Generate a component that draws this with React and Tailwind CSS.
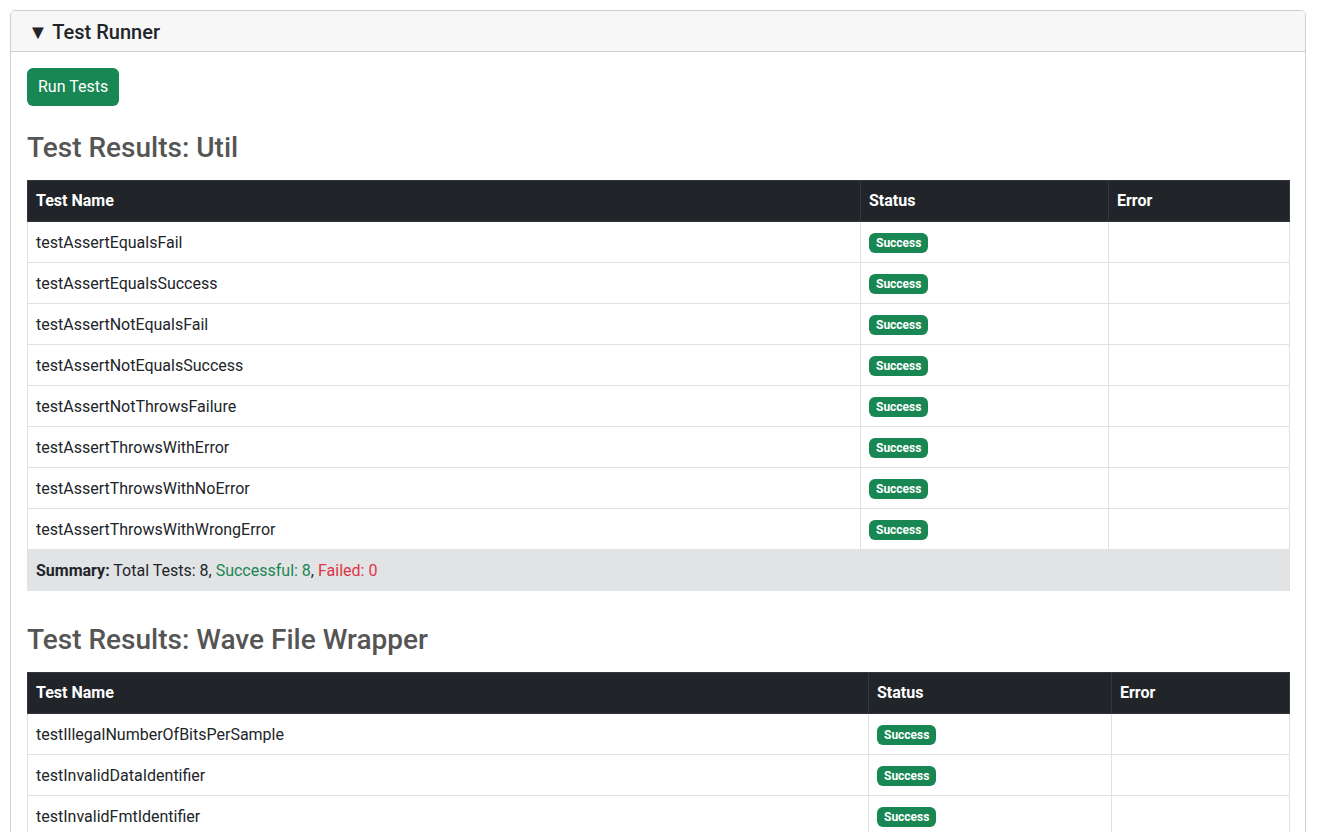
import { useState } from "react";

const utilTests = [
  "testAssertEqualsFail",
  "testAssertEqualsSuccess",
  "testAssertNotEqualsFail",
  "testAssertNotEqualsSuccess",
  "testAssertNotThrowsFailure",
  "testAssertThrowsWithError",
  "testAssertThrowsWithNoError",
  "testAssertThrowsWithWrongError",
];

const waveTests = [
  "testIllegalNumberOfBitsPerSample",
  "testInvalidDataIdentifier",
  "testInvalidFmtIdentifier",
  "testInvalidRiffIdentifier",
  "testInvalidWaveIdentifier",
];

function ResultsTable({ title, tests, cols }) {
  return (
    <section>
      <h3 className="text-[28px] leading-[34px] font-medium text-[#555555] mb-[15px]">
        Test Results: {title}
      </h3>
      <table className="table-fixed w-full border-collapse text-[16px] leading-6 text-[#212529]">
        <colgroup>
          <col style={{ width: cols[0] }} />
          <col style={{ width: cols[1] }} />
          <col style={{ width: cols[2] }} />
        </colgroup>
        <thead>
          <tr className="bg-[#212529] text-white text-left">
            <th className="font-bold px-2 py-2 border border-[#32383e] h-[41px]">Test Name</th>
            <th className="font-bold px-2 py-2 border border-[#32383e]">Status</th>
            <th className="font-bold px-2 py-2 border border-[#32383e]">Error</th>
          </tr>
        </thead>
        <tbody>
          {tests.map((t) => (
            <tr key={t}>
              <td className="px-2 pt-[9px] pb-[7px] border border-[#dee2e6] h-[41px]">{t}</td>
              <td className="px-2 py-2 border border-[#dee2e6]">
                <span className="inline-block bg-[#198754] text-white text-[12px] leading-[12px] font-bold px-[7px] py-[4px] rounded-[6px] align-middle">
                  Success
                </span>
              </td>
              <td className="px-2 py-2 border border-[#dee2e6]"></td>
            </tr>
          ))}
          <tr className="bg-[#e2e3e5]">
            <td colSpan={3} className="px-2 pt-[9px] pb-[7px] border border-[#dee2e6] h-[41px]">
              <strong className="font-bold">Summary:</strong> Total Tests: {tests.length},{" "}
              <span className="text-[#198754]">Successful: {tests.length}</span>,{" "}
              <span className="text-[#dc3545]">Failed: 0</span>
            </td>
          </tr>
        </tbody>
      </table>
    </section>
  );
}

export default function App() {
  const [open, setOpen] = useState(true);

  return (
    <div className="h-screen overflow-hidden bg-white font-['Segoe_UI',Roboto,'Noto_Sans',sans-serif]">
      <div className="mt-[10px] ml-[10px] mr-[26px] border border-[#d0d0d0] rounded-[5px] overflow-hidden">
        <div
          className="h-[41px] bg-[#f7f7f7] border-b border-[#d0d0d0] flex items-center pl-[17px] pt-[2px] cursor-pointer"
          onClick={() => setOpen((p) => !p)}
        >
          <span className="text-[20px] font-medium text-[#212529]">
            {open ? "▼" : "▶"} Test Runner
          </span>
        </div>
        {open && (
          <div className="px-4 pt-4 pb-4">
            <button className="bg-[#198754] text-white text-[16px] leading-6 px-[11px] py-[7px] rounded-[6px] h-[38px] whitespace-nowrap">
              Run Tests
            </button>
            <div className="mt-[25px]">
              <ResultsTable title="Util" tests={utilTests} cols={["833px", "248px", "181px"]} />
            </div>
            <div className="mt-[32px]">
              <ResultsTable
                title="Wave File Wrapper"
                tests={waveTests}
                cols={["841px", "243px", "178px"]}
              />
            </div>
          </div>
        )}
      </div>
    </div>
  );
}
